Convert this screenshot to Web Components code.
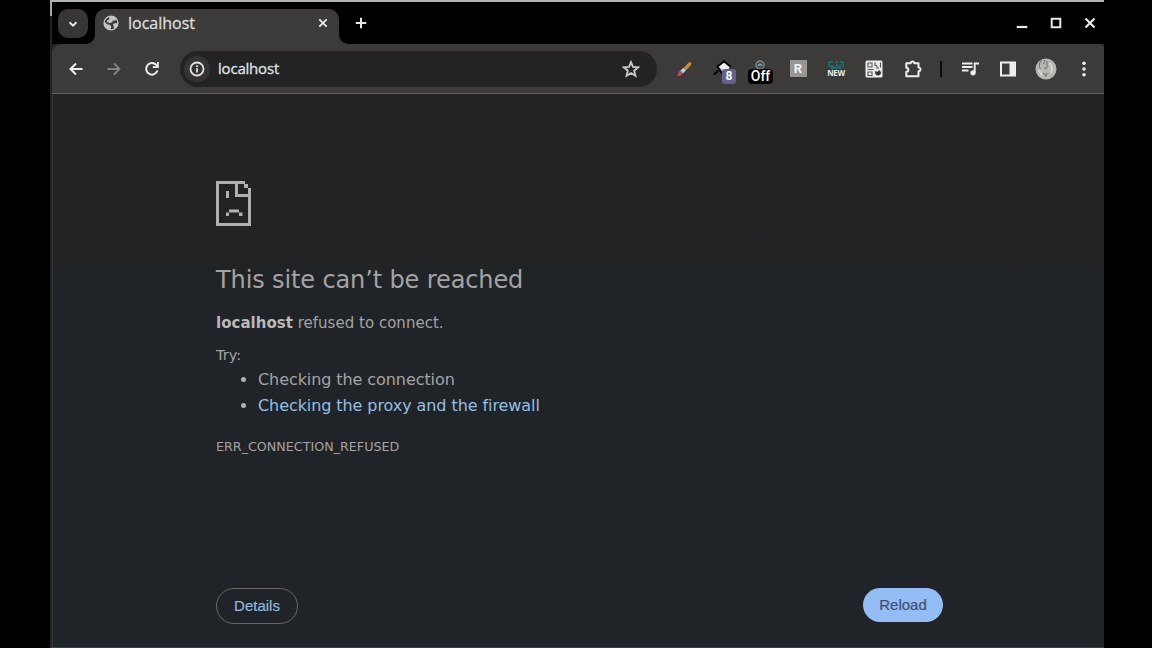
<!DOCTYPE html>
<html lang="en">
<head>
<meta charset="utf-8">
<title>localhost</title>
<style>
html, body { margin: 0; height: 100%; background: #000; overflow: hidden; }
body { font-family: "DejaVu Sans", sans-serif; }
</style>
</head>
<body>
<browser-window>
  <tab-strip slot="tabs"><browser-tab>localhost</browser-tab></tab-strip>
  <tool-bar slot="toolbar"><address-bar>localhost</address-bar></tool-bar>
  <error-page>
    <span slot="title">This site can’t be reached</span>
    <pill-button slot="actions" kind="outline">Details</pill-button>
    <pill-button slot="actions" kind="filled">Reload</pill-button>
  </error-page>
</browser-window>
<script>
const define = (name, html) => customElements.define(name, class extends HTMLElement {
  connectedCallback() {
    if (this.shadowRoot) return;
    const t = document.createElement('template');
    t.innerHTML = html;
    this.attachShadow({ mode: 'open' }).append(t.content.cloneNode(true));
  }
});

const icons = {
  down: [12, '<path d="M2.5 4.2 6 7.6l3.5-3.4" fill="none" stroke="currentColor" stroke-width="2"/>'],
  globe: [16, '<circle cx="8" cy="8" r="6.900" fill="#3c3b3a" stroke="#c3c4c4" stroke-width="1.400"/><path d="M1 6.500 4.500 9.500l2.500.3 1.200 1.700-.7 3.500C3.500 15 .6 11.500 1 6.500zM6 1.300 9.500.9 13.500 3l-1 2.500-2.700.3L9 7.500 6.500 8 4 7l.3-2 2-.6zM10 9l2.500-1 2.700.5-.8 3.200-2.700 2.400-1-2z" fill="#c3c4c4"/>'],
  close: [12, '<path d="m2.300 2.300 7.400 7.400m0-7.400L2.300 9.700" stroke="currentColor" stroke-width="1.900"/>'],
  plus: [12, '<path d="M6 .8v10.400M.8 6h10.400" stroke="currentColor" stroke-width="2"/>'],
  min: [12, '<path d="M.7 10h10.600" stroke="currentColor" stroke-width="2.200"/>'],
  max: [12, '<path d="M1.700 1.700h8.600v8.600H1.700z" fill="none" stroke="currentColor" stroke-width="2"/>'],
  wclose: [12, '<path d="m1.500 1.500 9 9m0-9-9 9" stroke="currentColor" stroke-width="2.200"/>'],
  back: [16, '<path d="M14.500 8H2.600M8 2.500 2.500 8 8 13.500" fill="none" stroke="currentColor" stroke-width="2"/>'],
  forward: [16, '<path d="M1.500 8h11.900M8 2.500 13.500 8 8 13.500" fill="none" stroke="currentColor" stroke-width="1.800"/>'],
  reload: [16, '<path d="M13.500 9.500A5.800 5.800 0 1 1 12.300 4L14 5.700" fill="none" stroke="currentColor" stroke-width="2"/><path d="M14.800 1v6H8.800V5.200H13V1z" fill="currentColor"/>'],
  info: [16, '<circle cx="8" cy="8" r="6.500" fill="none" stroke="currentColor" stroke-width="1.800"/><path d="M8 7.200v4.300M8 4.300v1.700" stroke="currentColor" stroke-width="1.800"/>'],
  star: [18, '<path d="m9 2.200 2 4.700 5.100.4-3.900 3.400 1.200 5L9 13l-4.400 2.700 1.200-5-3.900-3.400 5.100-.4z" fill="none" stroke="currentColor" stroke-width="1.900"/>'],
  brush: [16, '<path d="M7 7.400 12.200 2c1.500-1.500 3.500-.9 3.100 1-.2 1-.8 1.700-1.500 2.400L9.500 9.700z" fill="#c98a32"/><path d="m4.300 9.600 3-2.700 2.500 2.700-3 2.900z" fill="#a9d5ff"/><path d="M1 14.500c1.300-.9 1.200-3.900 3.300-4.900l2.500 2.900c-1.300 2.500-4 2.600-5.800 2z" fill="#dc4050"/>'],
  pin: [20, '<path d="M10.500 2.500 17 8l-5 6.500-7-5.500z" fill="#eee"/><path d="m6.500 8.300 6 4.500-1.500 2-6-4.500z" fill="#8ebdff"/><path d="m10 1.500 8 6.500M4 7.500 10.500 3M4 7l5.500 8M5.500 11.500.8 15.500" stroke="#050505" stroke-width="2"/>'],
  lens: [10, '<circle cx="5" cy="5" r="4" fill="#444" stroke="#888" stroke-width="1.300"/><path d="M2.500 6a2.500 2.500 0 0 1 5 0z" fill="#48a9b4"/>'],
  tv: [18, '<path d="M2 7V2h4m2 0h3m2 0h3v5" fill="none" stroke="#167c80" stroke-width="1.300"/><path d="M4 7.500V6h2v1.500m3-1 1-2 1 2m2-2v3M4 8h10" fill="none" stroke="#127b80" stroke-width="1.300"/>'],
  qr: [18, '<rect x=".5" y=".5" width="17" height="17" rx="1.500" fill="#ecebea"/><path d="M3 3h4v4H3zM10 2.500v3h2M15.500 2.500v5M2.500 9.500h6M12 6v2h2M3 12h4v3.500H3z" fill="none" stroke="#555" stroke-width="1.100"/><path d="M10 11.500c1-.5 1.800-.2 2.500.5L14 10l2 2c.2 2-1.200 3.500-3 3.500-1.600 0-3-1-3-4z" fill="#333"/>'],
  puzzle: [20, '<path d="M3.300 4.300h4.400c-.2-2.500 3.800-2.500 3.600 0h4.200v4.300c2.700-.3 2.700 4 0 3.700v4.900H3.300v-4.400c2.800-.2 2.800-3.900 0-4.100z" fill="none" stroke="currentColor" stroke-width="2" stroke-linejoin="round"/>'],
  music: [18, '<path d="M1 3.500h10.500M1 7h10.500M1 10.500h6.500M13.700 12.500V3.500H18" fill="none" stroke="currentColor" stroke-width="1.900"/><circle cx="12" cy="12.800" r="2.600" fill="currentColor"/>'],
  panel: [16, '<path d="M1 1.500h14v13H1z" fill="none" stroke="currentColor" stroke-width="2"/><path d="M9.500 1.500H15v13H9.500z" fill="currentColor"/>'],
  avatar: [22, '<circle cx="11" cy="11" r="10.500" fill="#b8b6b3"/><path d="M7 1.800C4 4 3.500 8 5.500 11M10 2c-1 2 0 3-2 4M12 3v4m-3 3c2 1 4-1 3-3M8 15l3 3 1-3" fill="none" stroke="#7b7976" stroke-width="1.200"/><path d="M14 5c3 2 4 6 2 10M4 12l3 6" fill="none" stroke="#d8d6d4" stroke-width="2"/>'],
  dots: [18, '<g fill="currentColor"><circle cx="9" cy="3.200" r="1.800"/><circle cx="9" cy="9" r="1.800"/><circle cx="9" cy="14.800" r="1.800"/></g>'],
  sad: [45, '<path fill="#b0b0b0" fill-rule="evenodd" d="M0 0h29v3h3v4h3v38H0zM3 3v39h29V16H19V3zM22 3v10h10V7h-4V3z"/><path fill="#b0b0b0" d="M10 10h3v7h-3zM13 28.500h10v3H13zM10 31.500h3V35h-3zM23 31.500h3.500V35H23z"/>']
};

customElements.define('ui-icon', class extends HTMLElement {
  connectedCallback() {
    if (this.shadowRoot) return;
    const [n, body] = icons[this.getAttribute('name')];
    const w = this.getAttribute('name') === 'sad' ? 35 : n;
    this.attachShadow({ mode: 'open' }).innerHTML =
      `<style>:host{display:inline-flex;flex:none}svg{display:block}</style>
       <svg width="${w}" height="${n}" viewBox="0 0 ${w} ${n}" aria-hidden="true">${body}</svg>`;
  }
});

define('browser-window', `<style>
:host{display:flex;flex-direction:column;box-sizing:border-box;width:1054px;height:648px;margin-left:50px;
 background:linear-gradient(#aaa9a7,#aaa9a7) 0 0/2px 14px no-repeat,#242322;border-top:2px solid #b1b0ae;border-bottom:1px solid #33424c;padding-left:2px}
</style><slot name="tabs"></slot><slot name="toolbar"></slot><slot></slot>`);

define('tab-strip', `<style>
:host{display:flex;height:42px;background:#000;color:#e8e8e8;flex:none}
.menu{width:30px;height:29px;margin:7px 0 0 6px;border-radius:10px;background:#373635;display:flex;align-items:center;justify-content:center}
.new{margin:15px 0 0 16px}
.win{margin-left:auto;display:flex;gap:22px;padding:15px 8px 0 0}
</style><div class="menu"><ui-icon name="down"></ui-icon></div><slot></slot>
<ui-icon class="new" name="plus"></ui-icon>
<div class="win"><ui-icon name="min"></ui-icon><ui-icon name="max"></ui-icon><ui-icon name="wclose"></ui-icon></div>`);

define('browser-tab', `<style>
:host{display:flex;align-items:center;position:relative;box-sizing:border-box;width:244px;height:35px;margin:7px 0 0 7px;padding:0 10px 7px 8px;
 background:#3c3b3a;border-radius:10px 10px 0 0;font:16px "Open Sans",sans-serif;color:#dededd}
:host::before,:host::after{content:"";position:absolute;bottom:0;width:9px;height:9px}
:host::before{right:100%;background:radial-gradient(circle at 0 0,transparent 8.500px,#3c3b3a 9px)}
:host::after{left:100%;background:radial-gradient(circle at 100% 0,transparent 8.500px,#3c3b3a 9px)}
span{margin-left:9px;-webkit-text-stroke:.3px currentColor}
.x{margin-left:auto;color:#e8e8e8}
</style><ui-icon name="globe"></ui-icon><span><slot></slot></span><ui-icon class="x" name="close"></ui-icon>`);

define('tool-bar', `<style>
:host{display:flex;align-items:center;box-sizing:border-box;height:50px;flex:none;padding:0 1px 0 5px;background:#3c3b3a;border-bottom:1px solid #646361;border-radius:9px 4px 0 0;color:#eeeded}
slot{display:block;margin:0 8px 0 9px}
.c{width:38px;height:38px;display:flex;align-items:center;justify-content:center;flex:none;position:relative}
.dim{color:#858483}
.h{padding-left:2px;width:36px}
.sep{width:20px;display:flex;justify-content:center}
.sep i{width:2px;height:16px;background:#0c0c0c}
.badge{position:absolute;left:19px;top:19px;width:14px;height:15px;border-radius:3px;background:#64618f;color:#fff;font:bold 12px/15px Roboto,sans-serif;text-align:center}
.off{position:absolute;left:7px;top:19px;width:25px;height:15px;border-radius:4px;background:#000;color:#fff;font:500 14px/15px Roboto,sans-serif;text-align:center}
.lens{position:absolute;left:14px;top:10px}
.r{width:17px;height:17px;background:#989796;color:#f3f3f3;font:bold 13px/17px Roboto,sans-serif;text-align:center}
.new{position:absolute;left:10px;top:18px;width:18px;font:bold 8px/9px "Open Sans",sans-serif;text-align:center;letter-spacing:-.4px}
.tv{position:absolute;left:10px;top:10px}
.pin{position:absolute;left:10px;top:9px}
</style>
<div class="c"><ui-icon name="back"></ui-icon></div><div class="c dim"><ui-icon name="forward"></ui-icon></div><div class="c"><ui-icon name="reload"></ui-icon></div>
<slot></slot>
<div class="c"><ui-icon name="brush"></ui-icon></div>
<div class="c"><ui-icon class="pin" name="pin"></ui-icon><span class="badge">8</span></div>
<div class="c"><ui-icon class="lens" name="lens"></ui-icon><span class="off">Off</span></div>
<div class="c"><span class="r">R</span></div>
<div class="c"><ui-icon class="tv" name="tv"></ui-icon><span class="new">NEW</span></div>
<div class="c"><ui-icon name="qr"></ui-icon></div>
<div class="c h"><ui-icon name="puzzle"></ui-icon></div>
<div class="sep"><i></i></div>
<div class="c"><ui-icon name="music"></ui-icon></div><div class="c"><ui-icon name="panel"></ui-icon></div>
<div class="c"><ui-icon name="avatar"></ui-icon></div><div class="c"><ui-icon name="dots"></ui-icon></div>`);

define('address-bar', `<style>
:host{display:flex;align-items:center;box-sizing:border-box;width:477px;height:36px;border-radius:18px;background:#242323;padding:0 17px 0 4px;font:15px "Open Sans",sans-serif;color:#dfe3e8}
.i{width:26px;height:26px;border-radius:13px;background:#353433;display:flex;align-items:center;justify-content:center}
span{margin:-2px 0 0 8px;letter-spacing:-.2px;-webkit-text-stroke:.3px currentColor}
.s{margin-left:auto;color:#c8c8c8}
</style><div class="i"><ui-icon name="info"></ui-icon></div><span><slot></slot></span><ui-icon class="s" name="star"></ui-icon>`);

define('error-page', `<style>
:host{display:flex;flex-direction:column;flex:1;min-height:0;box-sizing:border-box;padding:87px 161px 23px 163px;color:#a3a3a3;
 background:linear-gradient(#232323 0 23%,#202327 35%,#202327);border-left:1px solid #363534}
ui-icon{align-self:flex-start}
h1{margin:38px 0 0;font:24px/32px "DejaVu Sans",sans-serif;letter-spacing:-.12px;white-space:nowrap}
p{margin:0;font-size:15px;line-height:20px;white-space:nowrap}
.msg{margin-top:17px;letter-spacing:.02px}.try{margin-top:12px;font-size:14.500px}
b{color:#bababa}
ul{margin:2px 0 0;padding:0 0 0 42px;font-size:16px;line-height:25.500px;letter-spacing:-.08px}
li::marker{color:#b0b0b0}
a{color:#92c0e2}
.code{margin-top:19px;font-size:12.700px;line-height:20px}
footer{margin-top:auto;display:flex;justify-content:space-between;align-items:flex-start}
</style>
<ui-icon name="sad"></ui-icon>
<h1><slot name="title"></slot></h1>
<p class="msg"><b>localhost</b> <span>refused to connect.</span></p>
<p class="try">Try:</p>
<ul><li><span>Checking the connection</span></li><li><a>Checking the proxy and the firewall</a></li></ul>
<p class="code">ERR_CONNECTION_REFUSED</p>
<footer><slot name="actions"></slot></footer>`);

define('pill-button', `<style>
:host{display:flex;align-items:center;justify-content:center;box-sizing:border-box;width:82px;height:36px;padding-bottom:2px;border-radius:18px;font:15px "Liberation Sans",sans-serif;-webkit-text-stroke:.2px currentColor}
:host([kind=outline]){border:1px solid #686868;color:#8eb9dc}
:host([kind=filled]){width:80px;height:34px;background:#94bdf6;color:#41516b}
</style><slot></slot>`);
</script>
</body>
</html>
